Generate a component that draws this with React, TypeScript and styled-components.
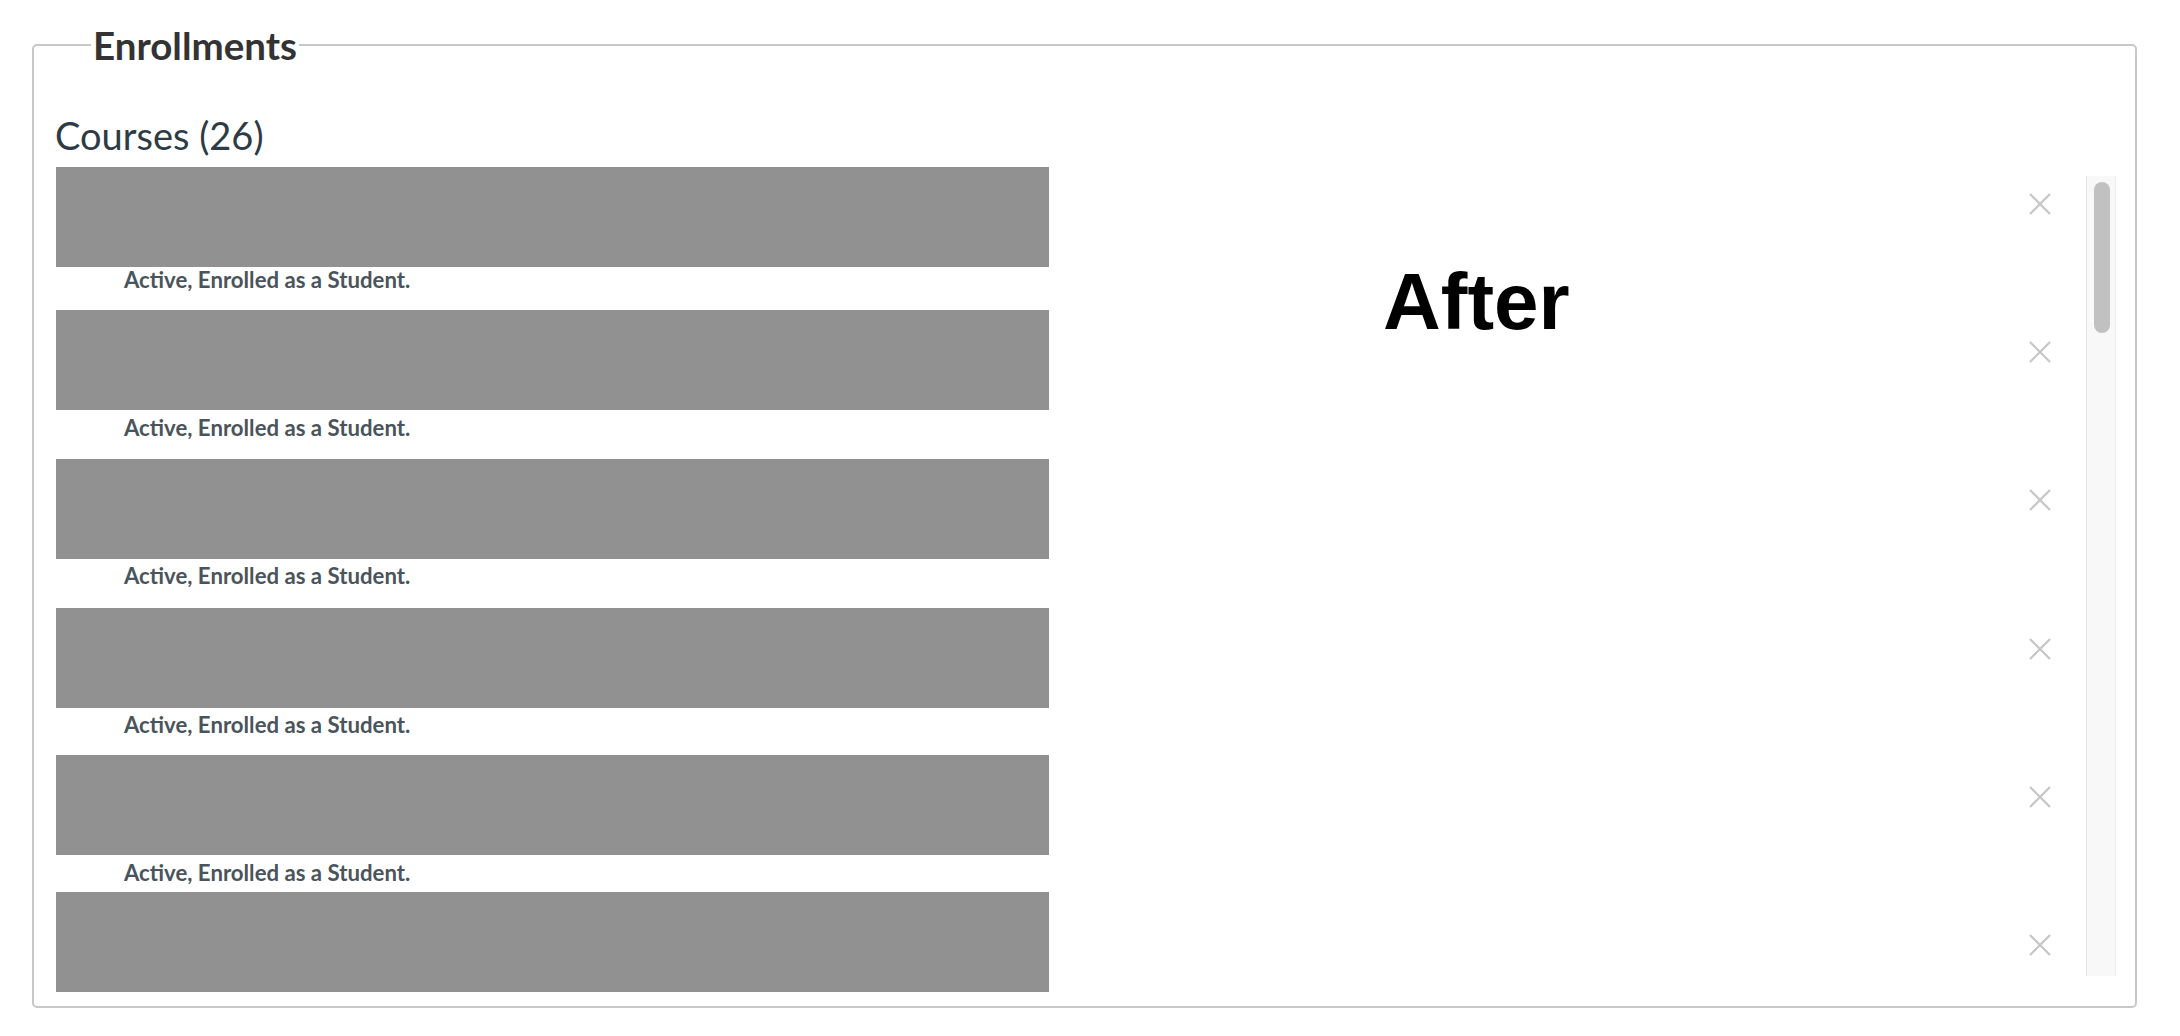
import React from 'react';
import styled, { createGlobalStyle } from 'styled-components';

const GlobalStyle = createGlobalStyle`
    html, body {
        margin: 0;
        padding: 0;
        background: #fff;
    }
    body {
        font-family: Lato, "Open Sans", sans-serif;
    }
`

const Page = styled.div`
    position: relative;
    padding: 21px 43px 0 32px;
`

const Fieldset = styled.fieldset`
    margin: 0;
    min-width: 0;
    padding: 45px 19px 14px 22px;
    border: 2px solid #c8c8c8;
    border-radius: 5px;
`

const Legend = styled.legend`
    margin-left: 35px;
    padding: 0 2px;
    font-size: 38.5px;
    line-height: 48px;
    font-weight: 700;
    color: #333;
`

const Heading = styled.h2`
    margin: 0 0 10px -1px;
    font-size: 38px;
    line-height: 43px;
    font-weight: 400;
    color: #2d3b45;
`

const Body = styled.div`
    display: flex;
    align-items: flex-start;
`

const List = styled.ul`
    flex: 1;
    height: 825px;
    margin: 0;
    padding: 0;
    list-style: none;
    overflow: hidden;
`

const Row = styled.li`
    display: grid;
    grid-template-columns: 1fr auto;
    height: 148.2px;
`

const Info = styled.div`
    display: flex;
    flex-direction: column;
`

const NameArea = styled.div`
    height: 100px;
`

// the course names are blacked out in the screenshot
const Redacted = styled.div<{ $shift: number }>`
    width: 993px;
    height: 100px;
    margin-top: ${p => p.$shift}px;
    background: #919191;
`

const Status = styled.div`
    padding-left: 68px;
    font-size: 22.2px;
    line-height: 26px;
    font-weight: 700;
    color: #4a545c;
`

const RemoveButton = styled.button`
    display: flex;
    align-items: center;
    justify-content: center;
    width: 42px;
    height: 42px;
    margin: 16px 25px 0 0;
    padding: 0;
    border: none;
    background: transparent;
    cursor: pointer;
`

const Track = styled.div`
    box-sizing: border-box;
    width: 30px;
    height: 800px;
    margin-top: 9px;
    padding: 6px 0 0 7px;
    background: #f8f8f8;
    border-left: 1px solid #e4e4e4;
    border-right: 1px solid #ececec;
`

const Thumb = styled.div`
    width: 16px;
    height: 151px;
    border-radius: 8px;
    background: #c1c1c1;
`

const Badge = styled.div`
    position: absolute;
    left: 1383px;
    top: 262px;
    font-family: "Liberation Sans", Arial, sans-serif;
    font-size: 80px;
    line-height: 1;
    font-weight: 700;
    color: #000;
`

const CloseIcon = () => (
    <svg width="22" height="22" viewBox="0 0 22 22">
        <path d="M1 1 L21 21 M21 1 L1 21" stroke="#c6c6c6" strokeWidth="2.2" fill="none"/>
    </svg>
)

// how far each black-out box sits above its row (only the rows in view)
const courses = [0, -5, -4, -4, -5, -16].map((shift, i) => ({ id: i, shift }))

export default () => (
    <Page>
        <GlobalStyle />
        <Fieldset>
            <Legend>Enrollments</Legend>
            <Heading>Courses (26)</Heading>
            <Body>
                <List>
                    {courses.map(c => (
                        <Row key={c.id}>
                            <Info>
                                <NameArea>
                                    <Redacted $shift={c.shift}/>
                                </NameArea>
                                <Status>Active, Enrolled as a Student.</Status>
                            </Info>
                            <RemoveButton aria-label="Remove enrollment">
                                <CloseIcon/>
                            </RemoveButton>
                        </Row>
                    ))}
                </List>
                <Track>
                    <Thumb/>
                </Track>
            </Body>
        </Fieldset>
        <Badge>After</Badge>
    </Page>
)
